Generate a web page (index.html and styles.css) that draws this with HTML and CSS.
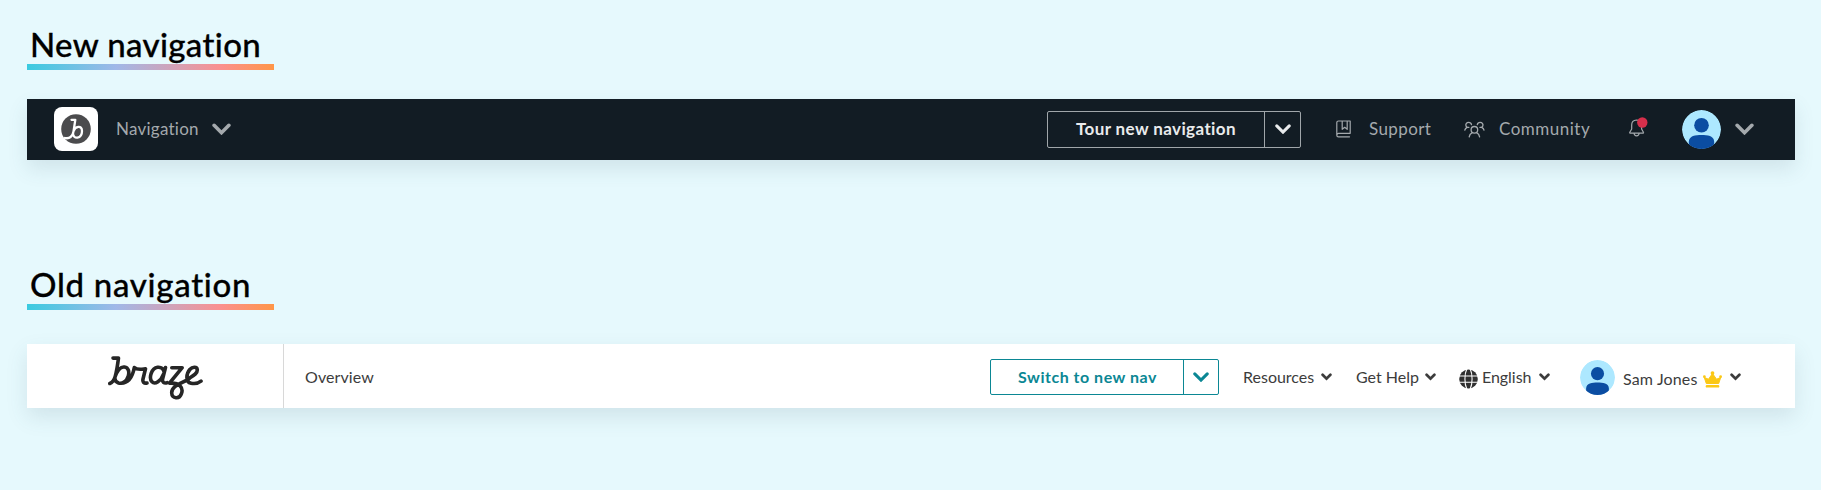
FILE: index.html
```html
<!DOCTYPE html>
<html lang="en">
<head>
<meta charset="utf-8">
<title>Navigation</title>
<link rel="stylesheet" href="styles.css">
</head>
<body>
<svg class="defs" width="0" height="0">
  <symbol id="chevron" viewBox="0 0 18 11"><path d="M2 2l7 7 7-7" fill="none" stroke="currentColor" stroke-width="3.4" stroke-linecap="round" stroke-linejoin="miter"/></symbol>
  <symbol id="chevron-bold" viewBox="0 0 11 8"><path d="M1.600 1.800l3.900 3.900 3.900-3.900" fill="none" stroke="currentColor" stroke-width="2.700" stroke-linecap="round" stroke-linejoin="miter"/></symbol>
  <symbol id="avatar" viewBox="0 0 40 40">
    <clipPath id="disc"><circle cx="20" cy="20" r="20"/></clipPath>
    <g clip-path="url(#disc)"><circle cx="20" cy="20" r="20" fill="#ade8ff"/><circle cx="20" cy="15.6" r="7.5" fill="#0b4da2"/><path d="M7 41V32.500C7 26.500 14 25.700 20 25.700S33 26.500 33 32.500V41z" fill="#0b4da2"/></g>
  </symbol>
</svg>

<section class="panel panel-new">
  <h2 class="title title-new">New navigation</h2>
  <nav class="bar bar-dark">
    <span class="tile"><svg width="30" height="30" viewBox="0 0 30 30"><circle cx="15" cy="15" r="14.800" fill="#4b4b4d"/><path d="M10.500 5.800H14.300L12.500 17.500C11.700 22.500 8.500 25 4 24M12.700 17C14 12.500 21 10.500 21 17C21 25 11.800 26 12 19" fill="none" stroke="#fff" stroke-width="2.300" stroke-linecap="round" stroke-linejoin="round"/></svg></span>
    <span class="label nav-label">Navigation</span>
    <svg class="chev nav-chev"><use href="#chevron"/></svg>
    <button class="split split-dark"><span class="split-text tour">Tour new navigation</span><span class="split-arrow"><svg class="chev-mid"><use href="#chevron"/></svg></span></button>
    <svg class="book" width="16" height="18" viewBox="0 0 16 18" fill="none" stroke="#a4a9ad" stroke-width="1.200" stroke-linejoin="round" stroke-linecap="round"><path d="M14.200 13.200V1H2.500C1.500 1 .8 1.700.8 2.600V15.200C.8 16.200 1.500 16.800 2.500 16.800H13.500M.9 15C.9 14 1.600 13.300 2.500 13.300H14.200M6.200 1V9.300L8.700 7.300 11.200 9.300V1"/></svg>
    <span class="label support">Support</span>
    <svg class="people" width="21" height="17" viewBox="0 0 21 17" fill="none" stroke="#a4a9ad" stroke-width="1.300" stroke-linecap="round" stroke-linejoin="round"><circle cx="10.400" cy="8.800" r="3.300"/><path d="M5.200 15.800C5.500 13.500 7 12.300 8.200 11.700M15.600 15.800C15.300 13.500 13.800 12.300 12.600 11.700M7.500 3.700C7.200 2.200 6 1.400 4.700 1.400C2.500 1.400 1.200 3.400 2.100 5.100C2.400 5.700 2.800 6.100 3.200 6.300C1.700 6.900 1 8 .8 9.200M13.300 3.700C13.600 2.200 14.800 1.400 16.100 1.400C18.300 1.400 19.600 3.400 18.700 5.100C18.400 5.700 18 6.100 17.600 6.300C19.100 6.900 19.800 8 20 9.200M3.200 6.300H4.900M17.600 6.300H15.900"/></svg>
    <span class="label community">Community</span>
    <svg class="bell" width="20" height="21" viewBox="0 0 20 21"><path d="M7.500 3C4.500 3.200 2.700 5.200 2.700 8V12L.8 15.300C.6 15.800.8 16.200 1.400 16.200H13.800C14.400 16.200 14.700 15.800 14.400 15.300L12.600 12V7C12 4.500 10 3 7.500 3ZM5 16.300C5.200 18.200 6.200 18.900 7.600 18.900S10 18.200 10.200 16.300" fill="none" stroke="#a4a9ad" stroke-width="1.200" stroke-linejoin="round"/><circle cx="13.300" cy="5.500" r="5.200" fill="#d62f4b"/></svg>
    <svg class="avatar-lg"><use href="#avatar"/></svg>
    <svg class="chev user-chev"><use href="#chevron"/></svg>
  </nav>
</section>

<section class="panel panel-old">
  <h2 class="title title-old">Old navigation</h2>
  <nav class="bar bar-light">
    <span class="brand"><svg width="96" height="46" viewBox="0 0 96 46" role="img" aria-label="braze"><path d="M5 3.100H10.500C9.500 11 8.500 17 7.200 21.500C6 25.800 4.500 27.500 1.800 28.500M7 22C10 13.500 13 11.500 16.500 12C20.500 12.500 21.500 17 20.300 21C18.500 27 14 29 10.500 28C7.500 27 6.500 24.500 7 22M10.500 28C20 29.500 24.500 22 26.300 12.500C29 15.200 33 14.300 37.500 13.800L35 24C34.300 27 36 28.600 39 28M57.500 12.600L54.600 24C54 27 56 28.500 59 27.700M56.200 17C55.300 13.300 52.500 12 49.500 12.300C43.500 13 40.500 23 44 26.800C47 30 53 26 55.500 19M63.800 12.700H74.200L61.500 28.200C72 27.500 75.500 33 73.500 38.500C71.500 44.800 64 43.700 63.700 38C63.400 30 76 28 82 22.800C86.500 20 89.500 18 89.300 14.800C89 11.600 84.500 11.500 81.800 14.500C78 19 77.500 27 83 28.200C86.500 28.900 90 28.600 93 26.200" fill="none" stroke="#262626" stroke-width="3.600" stroke-linecap="round" stroke-linejoin="round"/></svg></span>
    <span class="item overview">Overview</span>
    <button class="split split-light"><span class="split-text switch">Switch to new nav</span><span class="split-arrow"><svg class="chev-mid"><use href="#chevron"/></svg></span></button>
    <span class="item resources">Resources</span><svg class="chev-sm"><use href="#chevron-bold"/></svg>
    <span class="item help">Get Help</span><svg class="chev-sm"><use href="#chevron-bold"/></svg>
    <svg class="globe" width="19" height="20" viewBox="0 0 19 20"><ellipse cx="9.500" cy="10" rx="9.300" ry="9.500" fill="#303030"/><path d="M0 7H19M0 13.200H19M7.800 0C5.300 5 5.300 15 7.800 20M11.200 0C13.700 5 13.700 15 11.200 20" fill="none" stroke="#fff" stroke-width="1.100"/></svg>
    <span class="item english">English</span><svg class="chev-sm"><use href="#chevron-bold"/></svg>
    <svg class="avatar-sm"><use href="#avatar"/></svg>
    <span class="item user">Sam Jones</span>
    <svg class="crown" width="19" height="17" viewBox="0 0 19 17" fill="#fbc816"><path d="M3.300 12.500L1.300 6.500 5.500 8.200 9.500 2.500 13.500 8.200 17.700 6.500 15.700 12.500Z" stroke="#fbc816" stroke-linejoin="round"/><circle cx="1.400" cy="5.700" r="1.400"/><circle cx="9.500" cy="2.100" r="1.900"/><circle cx="17.600" cy="5.700" r="1.400"/><rect x="2.700" y="14.100" width="13.600" height="2.500" rx="1.200"/></svg>
    <svg class="chev-sm last"><use href="#chevron-bold"/></svg>
  </nav>
</section>
</body>
</html>
```

FILE: styles.css
```css
* { box-sizing: border-box; }
body {
  margin: 0;
  height: 490px;
  overflow: hidden;
  background: #e6f9fd;
  font-family: Lato, "Open Sans", sans-serif;
}
svg { display: block; flex: none; }
.defs { position: absolute; }
.panel { padding: 0 26px 0 27px; }
.panel-new { height: 240px; padding-top: 24px; }
.panel-old { padding-top: 24px; }
.title {
  margin: 0;
  width: 247px;
  height: 46px;
  padding-left: 3px;
  font-size: 33px;
  line-height: 41px;
  font-weight: 500;
  color: #000;
  white-space: nowrap;
  background: linear-gradient(90deg, #3acbe0 0%, #a0b8e8 36%, #fa9090 78%, #ff9648 100%) left bottom / 100% 6px no-repeat;
  -webkit-text-stroke: 0.3px #000;
}
.title-new { letter-spacing: 0.35px; }
.title-old { letter-spacing: 0.7px; }
.bar {
  display: flex;
  align-items: center;
  white-space: nowrap;
  box-shadow: 0 9px 20px rgba(60, 95, 105, 0.13);
}
.bar-dark { height: 61px; margin-top: 29px; padding-bottom: 1px; background: #121c24; color: #a4a9ad; }
.bar-light { height: 64px; margin-top: 34px; padding-top: 2px; background: #fff; color: #3c3c3c; }
.label { flex: none; font-size: 17px; line-height: 24px; }
.item { flex: none; font-size: 16px; line-height: 24px; }

.tile {
  display: grid;
  place-items: center;
  flex: none;
  width: 44px;
  height: 44px;
  margin-left: 27px;
  border-radius: 8px;
  background: #fff;
}
.nav-label { width: 96px; margin-left: 18px; letter-spacing: 0.25px; }
.chev { width: 19px; height: 12px; }
.user-chev { margin-left: 14px; }

.split {
  display: flex;
  flex: none;
  padding: 0;
  border: 1px solid currentColor;
  border-radius: 2px;
  background: transparent;
  font-family: inherit;
  font-weight: 700;
  line-height: 24px;
}
.split-dark { width: 254px; height: 37px; margin-left: 816px; border-color: #a0a6aa; color: #e9ebec; font-size: 17px; }
.split-light { width: 229px; height: 36px; margin-left: 616px; color: #0b8794; font-size: 16px; }
.split-text { display: flex; align-items: center; flex: 1; border-right: 1px solid; border-color: inherit; }
.split-dark .split-text { border-color: #a0a6aa; }
.tour { padding-left: 28px; letter-spacing: 0.4px; }
.switch { padding-left: 27px; letter-spacing: 0.52px; }
.split-arrow { display: grid; place-items: center; width: 35px; }
.split-light .split-arrow { width: 34px; }
.chev-mid { width: 16px; height: 10px; }

.book { margin-left: 35px; }
.support { width: 63px; margin-left: 17px; letter-spacing: 0.4px; }
.people { margin-left: 32px; }
.community { width: 92px; margin-left: 14px; letter-spacing: 0.5px; }
.bell { margin-left: 38px; margin-bottom: 3px; }
.avatar-lg { width: 39px; height: 39px; margin-left: 33px; }

.brand { display: flex; flex: none; width: 257px; height: 64px; margin-top: -2px; padding: 11px 0 0 81px; border-right: 1px solid #d8d8d8; }
.overview { width: 69px; margin-left: 21px; letter-spacing: 0.1px; }
.resources { width: 70px; margin-left: 24px; }
.chev-sm { width: 11px; height: 8px; margin: 0 0 0 8px; }
.help { width: 61px; margin-left: 24px; }
.globe { margin: 3px 0 0 23px; }
.english { width: 49px; margin-left: 4px; letter-spacing: -0.05px; }
.avatar-sm { width: 35px; height: 35px; margin: 1px 0 0 30px; }
.user { width: 75px; margin: 3px 0 0 8px; letter-spacing: 0.15px; }
.crown { margin: 5px 0 0 5px; }
.chev-sm.last { margin-left: 8px; }
```
